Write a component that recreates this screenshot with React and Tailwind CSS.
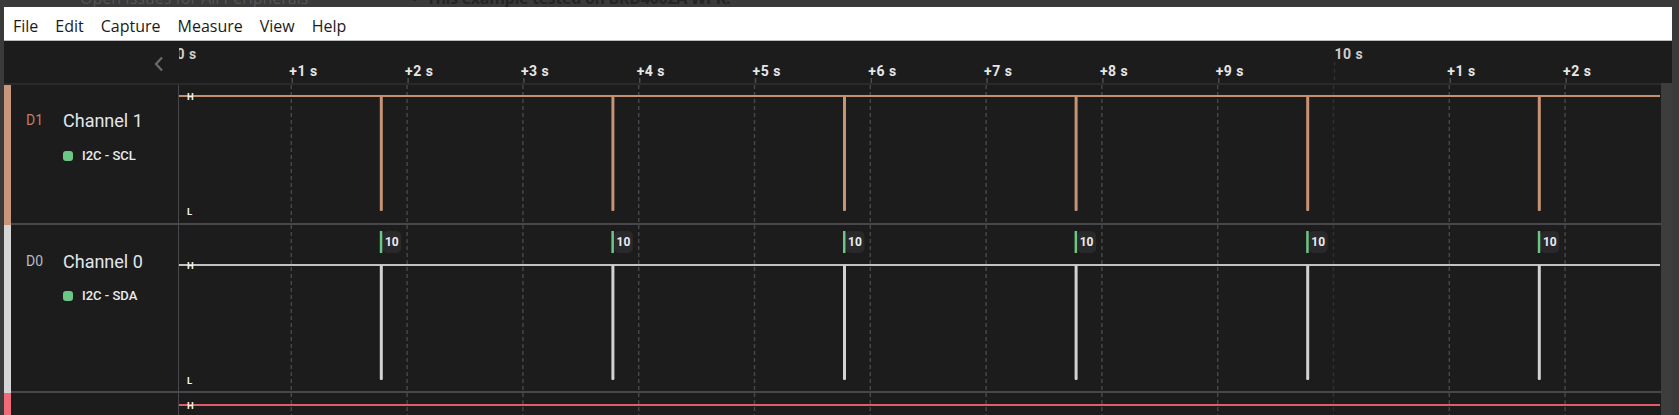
import React from "react";

const ticks = Array.from({ length: 13 }, (_, k) => k);
const tickX = (k) => -3.5 + 115.8 * k;
const pulses = Array.from({ length: 6 }, (_, k) => 202.3 + 231.6 * k);
const PLOT_W = 1481;

const menu = ["File", "Edit", "Capture", "Measure", "View", "Help"];

function Grid({ h }) {
  return ticks.map((k) =>
    k === 0 ? null : (
      <line
        key={k}
        x1={tickX(k)}
        x2={tickX(k)}
        y1={0}
        y2={h}
        stroke={k === 10 ? "#2e2e33" : "#464648"}
        strokeWidth={1.5}
        strokeDasharray="4 3"
      />
    )
  );
}

function Marker({ y, label }) {
  return (
    <text
      x={8}
      y={y + 3.5}
      fontSize={9.5}
      fontWeight={700}
      fill="#f2f2f2"
      fontFamily="Roboto, sans-serif"
    >
      {label}
    </text>
  );
}

function Plot({ h, hY, lY, line, pulse, badge }) {
  return (
    <svg width={PLOT_W} height={h} className="block shrink-0">
      <Grid h={h} />
      <line x1={0} x2={PLOT_W} y1={hY} y2={hY} stroke={line} strokeWidth={2} />
      {lY &&
        pulses.map((x, i) => (
          <rect key={i} x={x - 1.5} y={hY} width={3} height={lY - hY} rx={1} fill={pulse} />
        ))}
      {badge &&
        pulses.map((x, i) => (
          <g key={"b" + i}>
            <rect x={x + 1} y={6} width={19} height={22} rx={5} fill="#29292b" />
            <rect x={x - 1.5} y={6} width={2.5} height={22} fill="#6cc784" />
            <text
              x={x + 10.5}
              y={21}
              textAnchor="middle"
              fontSize={12}
              fontWeight={700}
              fill="#ececec"
              fontFamily="Roboto, sans-serif"
            >
              10
            </text>
          </g>
        ))}
      <Marker y={hY} label="H" />
      {lY && <Marker y={lY} label="L" />}
    </svg>
  );
}

function ChannelInfo({ id, idColor, name, tag, pt, gap }) {
  return (
    <div className={"flex flex-col pl-[15px] font-['Roboto',sans-serif] " + pt}>
      <div className="flex items-center h-[22px]">
        <span className="w-[37px] text-[14px]" style={{ color: idColor }}>
          {id}
        </span>
        <span className="text-[18px] text-[#e1e6eb]">{name}</span>
      </div>
      <div className={"flex items-center h-[16px] pl-[37px] " + gap}>
        <span className="w-[10px] h-[10px] rounded-[3px] bg-[#6cc784]" />
        <span className="ml-[9px] text-[13px] font-medium text-[#ececec]">{tag}</span>
      </div>
    </div>
  );
}

export default function App() {
  return (
    <div className="w-[1679px] h-[415px] bg-[#3a3a3a] flex flex-col overflow-hidden">
      {/* browser behind, mostly hidden */}
      <div className="h-[7px] overflow-hidden shrink-0">
        <div className="flex -mt-[12px] leading-[20px] text-[16px] font-['Open_Sans',sans-serif] whitespace-nowrap">
          <span className="ml-[80px] text-[#555555]">Open Issues for All Peripherals</span>
          <span className="ml-[103px] text-[#242424] font-bold">•</span>
          <span className="ml-[9px] text-[#242424] font-bold tracking-[-0.3px]">This example tested on BRD4002A WPK.</span>
        </div>
      </div>

      <div className="flex-1 min-h-0 ml-[4px] mr-[7px] flex flex-col bg-[#1c1c1c]">
        {/* MENU */}
        <div className="h-[34px] shrink-0 bg-white border-b border-[#bcbcbc] flex items-center pl-[9px] pt-[4px] gap-[17px] text-[16px] text-[#1b1b1b] font-['Open_Sans',sans-serif]">
          {menu.map((m) => (
            <span key={m}>{m}</span>
          ))}
        </div>

        {/* RULER */}
        <div className="h-[42px] shrink-0 flex">
          <div className="w-[175px] shrink-0 flex justify-end pr-[15px] pt-[15px]">
            <svg width="10" height="16" viewBox="0 0 10 16">
              <polyline points="8,1.5 2,8 8,14.5" fill="none" stroke="#6b6b6b" strokeWidth="2.2" />
            </svg>
          </div>
          <svg width={1493} height={42} className="block shrink-0 overflow-hidden font-['Roboto',sans-serif]">
            {ticks.map((k) => {
              const x = tickX(k) + 1;
              const major = k % 10 === 0;
              return (
                <g key={k}>
                  {major ? (
                    <line x1={x} x2={x} y1={21} y2={42} stroke="#2e2e33" strokeWidth={1.5} strokeDasharray="4 3" />
                  ) : (
                    <line x1={x} x2={x} y1={37} y2={42} stroke="#4c4c4e" strokeWidth={1.5} />
                  )}
                  <text
                    x={major ? x : x - 3}
                    y={major ? 18 : 35}
                    fontSize={14}
                    fontWeight={700}
                    letterSpacing={0.5}
                    fill={major ? "#cfcfcf" : "#e6e6e6"}
                  >
                    {major ? `${k} s` : `+${k % 10} s`}
                  </text>
                </g>
              );
            })}
          </svg>
        </div>

        <div className="flex-1 min-h-0 flex">
          <div className="flex-1 min-w-0 flex flex-col">
            <div className="h-[2px] bg-[#2a2a2e] shrink-0" />

            {/* CHANNEL 1 */}
            <div className="h-[140px] shrink-0 flex">
              <div className="w-[7px] bg-[#c9967c] shrink-0" />
              <div className="flex-1 flex border-b-2 border-[#48484c]">
                <div className="w-[168px] shrink-0 border-r border-[#48484c]">
                  <ChannelInfo id="D1" idColor="#c47d64" name="Channel 1" tag="I2C - SCL" pt="pt-[24px]" gap="mt-[17px]" />
                </div>
                <Plot h={138} hY={11} lY={126} line="#c68f70" pulse="#c89274" />
              </div>
            </div>

            {/* CHANNEL 0 */}
            <div className="h-[168px] shrink-0 flex">
              <div className="w-[7px] bg-[#d6d6d6] shrink-0" />
              <div className="flex-1 flex border-b-2 border-[#48484c]">
                <div className="w-[168px] shrink-0 border-r border-[#48484c]">
                  <ChannelInfo id="D0" idColor="#b4bcc4" name="Channel 0" tag="I2C - SDA" pt="pt-[25px]" gap="mt-[16px]" />
                </div>
                <Plot h={166} hY={40} lY={155} line="#c2c2c2" pulse="#d2d2d2" badge />
              </div>
            </div>

            {/* NEXT CHANNEL */}
            <div className="flex-1 min-h-0 flex overflow-hidden">
              <div className="w-[7px] bg-[#f06a7a] shrink-0" />
              <div className="flex-1 flex">
                <div className="w-[168px] shrink-0 border-r border-[#48484c]" />
                <Plot h={22} hY={12} line="#e05b6b" />
              </div>
            </div>
          </div>
          <div className="w-[11px] shrink-0 bg-[#3d3d3d]" />
        </div>
      </div>
    </div>
  );
}
